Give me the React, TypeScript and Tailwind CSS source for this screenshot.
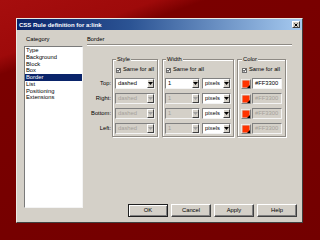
import clsx from 'clsx';

const categories = ['Type', 'Background', 'Block', 'Box', 'Border', 'List', 'Positioning', 'Extensions'];
const sides = ['Top:', 'Right:', 'Bottom:', 'Left:'];

function Arrow({ disabled }: { disabled?: boolean }) {
  return (
    <span className="flex h-full w-[7px] items-center justify-center border border-t-white border-l-white border-b-[#404040] border-r-[#404040] bg-[#d4d0c8]">
      <svg viewBox="0 0 5 3" className="h-[3px] w-[5px]">
        <polygon points="0,0 5,0 2.5,3" fill={disabled ? '#a0a0a0' : '#000'} />
      </svg>
    </span>
  );
}

function Select({ value, disabled, className }: { value: string; disabled?: boolean; className: string }) {
  return (
    <div
      className={clsx(
        'flex h-[11px] items-center border border-t-[#808080] border-l-[#808080] border-b-[#f4f4f4] border-r-[#f4f4f4]',
        disabled ? 'bg-[#d4d0c8]' : 'bg-white',
        className
      )}
    >
      <span className={clsx('flex-1 pl-[2px] leading-none', disabled ? 'text-[#a4a09a]' : 'text-black')}>{value}</span>
      <Arrow disabled={disabled} />
    </div>
  );
}

function CheckBox() {
  return (
    <svg viewBox="0 0 5 5" className="h-[5px] w-[5px]">
      <rect x="0.5" y="0.5" width="4" height="4" fill="#fff" stroke="#6f6f6f" strokeWidth="1" />
      <path d="M1.2 2.3 L2.1 3.4 L3.9 1.2" stroke="#000" strokeWidth="0.9" fill="none" />
    </svg>
  );
}

function Swatch() {
  return (
    <svg viewBox="0 0 10 10" className="h-[10px] w-[10px]">
      <rect x="0" y="0" width="10" height="10" fill="#d4d0c8" />
      <path d="M0 10 V0 H10" stroke="#fff" strokeWidth="1" fill="none" />
      <path d="M0.5 9.5 H9.5 V0.5" stroke="#808080" strokeWidth="1" fill="none" />
      <rect x="1.5" y="1.5" width="7" height="7" fill="#ff3300" />
      <polygon points="6,9 9,9 9,6" fill="#000" />
    </svg>
  );
}

function Group({ title, className, children }: { title: string; className: string; children: React.ReactNode }) {
  return (
    <fieldset
      className={clsx(
        'border border-[#8e8a84] pb-[2px] shadow-[inset_1px_1px_0_#fff,1px_1px_0_#fff]',
        className
      )}
    >
      <legend className="ml-[1px] bg-[#d4d0c8] px-[1px] leading-[6px]">{title}</legend>
      <div className="mt-[4px] flex h-[8px] items-center gap-[2px] pl-[1px]">
        <CheckBox />
        <span className="leading-none">Same for all</span>
      </div>
      <div className="mt-[4px] flex flex-col gap-[4px]">{children}</div>
    </fieldset>
  );
}

function Button({ label, primary }: { label: string; primary?: boolean }) {
  return (
    <button
      className={clsx(
        'flex h-[13px] w-[40px] items-center justify-center bg-[#d4d0c8] leading-none text-black',
        primary
          ? 'border border-[#202020] shadow-[inset_1px_1px_0_#fff,inset_-1px_-1px_0_#808080]'
          : 'border border-t-white border-l-white border-b-[#404040] border-r-[#404040] shadow-[inset_-1px_-1px_0_#808080]'
      )}
    >
      {label}
    </button>
  );
}

export default function App() {
  return (
    <div className="flex h-[240px] w-[320px] items-start bg-[linear-gradient(160deg,#a60e0e_0%,#9e0a0a_16%,#7a0000_21%,#730000_100%)] pl-[16px] pt-[18px] font-['Liberation_Sans',Arial,sans-serif] text-[5.8px] text-black">
      <div className="flex h-[205px] w-[287px] flex-col border border-t-[#ece9e4] border-l-[#ece9e4] border-b-[#404040] border-r-[#404040] bg-[#d4d0c8]">
        <div className="flex h-[11px] items-center justify-between bg-[linear-gradient(90deg,#0a246a_0%,#2c5494_40%,#a6caf0_100%)] px-[2px]">
          <span className="text-[6px] font-bold leading-none text-white">CSS Rule definition for a:link</span>
          <span className="flex h-[7px] w-[8px] items-center justify-center border border-t-white border-l-white border-b-[#404040] border-r-[#404040] bg-[#d4d0c8]">
            <svg viewBox="0 0 4 4" className="h-[4px] w-[4px]">
              <path d="M0.5 0.5 L3.5 3.5 M3.5 0.5 L0.5 3.5" stroke="#000" strokeWidth="1" />
            </svg>
          </span>
        </div>

        <div className="flex flex-1 pb-[5px] pl-[7px] pr-[5px] pt-[6px]">
          <div className="flex w-[59px] flex-col">
            <span className="h-[7px] pl-[2px] leading-[7px]">Category</span>
            <div className="mt-[3px] h-[162px] border border-t-[#7a7a7a] border-l-[#7a7a7a] border-b-[#f4f4f4] border-r-[#f4f4f4] bg-white">
              {categories.map((c) => (
                <div
                  key={c}
                  className={clsx('h-[6.75px] pl-[1px] leading-[6.75px]', c === 'Border' && 'bg-[#0a246a] text-white')}
                >
                  {c}
                </div>
              ))}
            </div>
          </div>

          <div className="ml-[4px] flex flex-1 flex-col">
            <div className="mr-[5px] h-[9px] border-b border-b-[#8e8a84] leading-[7px] shadow-[0_1px_0_#fff]">Border</div>

            <div className="mt-[11px] flex items-start">
              <div className="flex w-[25px] flex-col items-end gap-[4px] pr-[1px] pt-[22px]">
                {sides.map((s) => (
                  <span key={s} className="h-[11px] leading-[11px]">
                    {s}
                  </span>
                ))}
              </div>

              <Group title="Style" className="w-[46px] px-[2px]">
                {sides.map((s, i) => (
                  <Select key={s} value="dashed" disabled={i > 0} className="w-[40px]" />
                ))}
              </Group>

              <Group title="Width" className="ml-[4px] w-[72px] px-[2px]">
                {sides.map((s, i) => (
                  <div key={s} className="flex gap-[2px]">
                    <Select value="1" disabled={i > 0} className="w-[35px]" />
                    <Select value="pixels" className="w-[29px]" />
                  </div>
                ))}
              </Group>

              <Group title="Color" className="ml-[3px] w-[49px] px-[3px]">
                {sides.map((s, i) => (
                  <div key={s} className="flex h-[11px] items-center gap-[1px]">
                    <Swatch />
                    <div
                      className={clsx(
                        'flex h-[11px] w-[30px] items-center border border-t-[#808080] border-l-[#808080] border-b-[#f4f4f4] border-r-[#f4f4f4] pl-[2px] leading-none',
                        i > 0 ? 'bg-[#d4d0c8] text-[#a4a09a]' : 'bg-white text-black'
                      )}
                    >
                      #FF3300
                    </div>
                  </div>
                ))}
              </Group>
            </div>

            <div className="mt-auto flex justify-end gap-[3px]">
              <Button label="OK" primary />
              <Button label="Cancel" />
              <Button label="Apply" />
              <Button label="Help" />
            </div>
          </div>
        </div>
      </div>
    </div>
  );
}
